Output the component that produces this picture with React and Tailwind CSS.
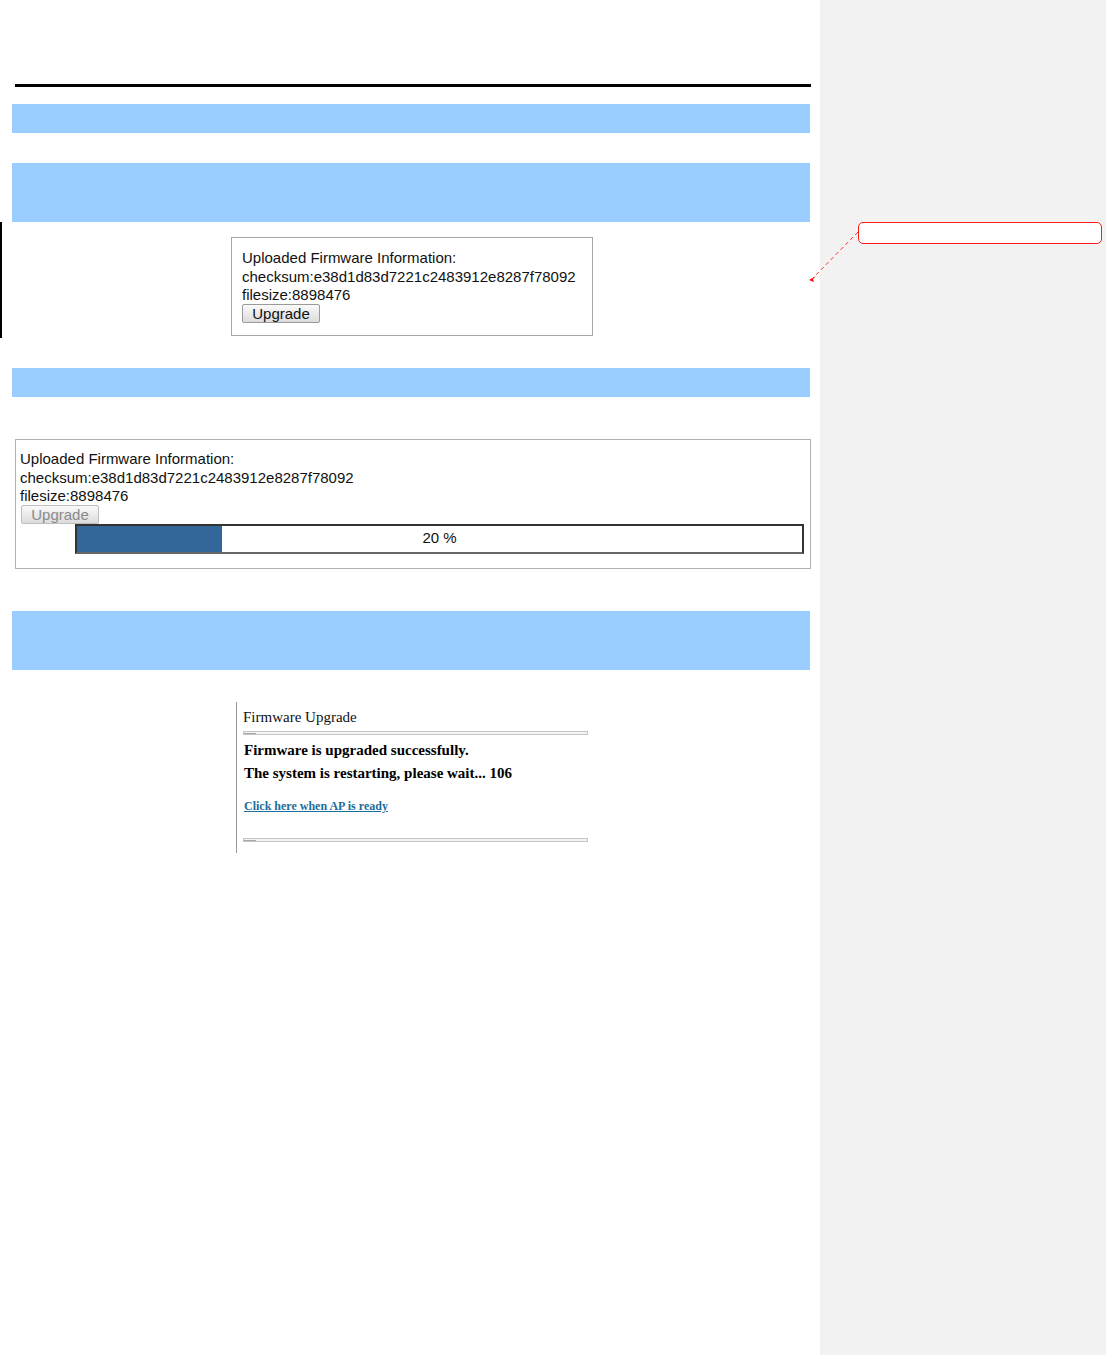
import React from 'react';

const sans = { fontFamily: '"Liberation Sans", Arial, sans-serif' };
const serif = { fontFamily: '"Liberation Serif", "Times New Roman", serif' };

const BlueBar = ({ className }) => (
  <div className={`ml-[12px] w-[798px] bg-[#99ccff] ${className}`} />
);

const UpgradeButton = ({ disabled }) => (
  <button
    type="button"
    disabled={disabled}
    className={`block w-[78px] h-[19px] rounded-[2px] border text-[15px] leading-[17px] bg-gradient-to-b from-[#fafafa] to-[#dcdcdc] ${
      disabled ? 'border-[#bdbdbd] text-[#8a8a8a]' : 'border-[#9a9a9a] text-[#111]'
    }`}
    style={sans}
  >
    Upgrade
  </button>
);

const FirmwareInfo = () => (
  <div className="text-[15px] leading-[18.5px] text-[#111]" style={sans}>
    <div>Uploaded Firmware Information:</div>
    <div>checksum:e38d1d83d7221c2483912e8287f78092</div>
    <div>filesize:8898476</div>
  </div>
);

const Rule = () => (
  <div className="relative w-[345px] h-[4px] border border-[#c4c4c4] bg-[#f4f4f4]">
    <div className="absolute left-0 bottom-0 w-[12px] h-[1px] bg-[#a8a8a8]" />
  </div>
);

export default function App() {
  return (
    <div className="relative flex w-[1106px] h-[1355px] bg-white">
      {/* document page */}
      <div className="w-[820px] pt-[84px]">
        <div className="ml-[15px] w-[796px] h-[3px] bg-black" />
        <BlueBar className="mt-[17px] h-[29px]" />
        <BlueBar className="mt-[30px] h-[59px]" />

        {/* step 1: uploaded info */}
        <div className="flex h-[116px]">
          <div className="w-[2px] h-full bg-black" />
          <div className="ml-[229px] mt-[15px] w-[362px] h-[99px] border border-[#a6a6a6] pl-[10px] pt-[11px]">
            <FirmwareInfo />
            <div className="-mt-[1px]">
              <UpgradeButton />
            </div>
          </div>
        </div>

        <BlueBar className="mt-[30px] h-[29px]" />

        {/* step 2: progress */}
        <div className="ml-[15px] mt-[42px] w-[796px] h-[130px] border border-[#b0b0b0] pl-[4px] pt-[10px]">
          <FirmwareInfo />
          <div className="ml-[1px] -mt-[1px]">
            <UpgradeButton disabled />
          </div>
          <div className="relative ml-[55px] w-[729px] h-[30px] border-2 border-[#333] border-b-[#666] bg-white">
            <div className="absolute left-0 top-0 bottom-0 w-[20%] bg-[#336699]" />
            <div
              className="relative flex h-full items-center justify-center text-[15px] text-[#111]"
              style={sans}
            >
              20 %
            </div>
          </div>
        </div>

        <BlueBar className="mt-[42px] h-[59px]" />

        {/* step 3: done */}
        <div className="ml-[236px] mt-[32px] h-[151px] border-l border-[#9a9a9a] pl-[6px] pt-[6px]" style={serif}>
          <div className="text-[15px] leading-[18px] text-[#111]">Firmware Upgrade</div>
          <div className="mt-[5px]">
            <Rule />
          </div>
          <div className="mt-[4px] pl-[1px] text-[15px] font-bold leading-[23px] text-black">
            <div>Firmware is upgraded successfully.</div>
            <div>The system is restarting, please wait... 106</div>
          </div>
          <a
            href="#"
            className="mt-[14px] block pl-[1px] text-[12px] font-bold leading-[15px] text-[#1b6e9c] underline"
          >
            Click here when AP is ready
          </a>
          <div className="mt-[24px]">
            <Rule />
          </div>
        </div>
      </div>

      {/* comment margin */}
      <div className="w-[286px] h-full bg-[#f2f2f2]" />

      {/* comment balloon and its connector */}
      <div className="absolute left-[858px] top-[222px] w-[244px] h-[22px] rounded-[5px] border border-[#ff1a1a] bg-white" />
      <svg className="absolute left-[800px] top-[225px]" width="64" height="64" viewBox="0 0 64 64">
        <line x1="58" y1="7" x2="13" y2="53" stroke="#ff3333" strokeWidth="1" strokeDasharray="4 3" />
        <path d="M9 55 L16 51 L13 54 L14 57 Z" fill="#ff0000" />
      </svg>
    </div>
  );
}
